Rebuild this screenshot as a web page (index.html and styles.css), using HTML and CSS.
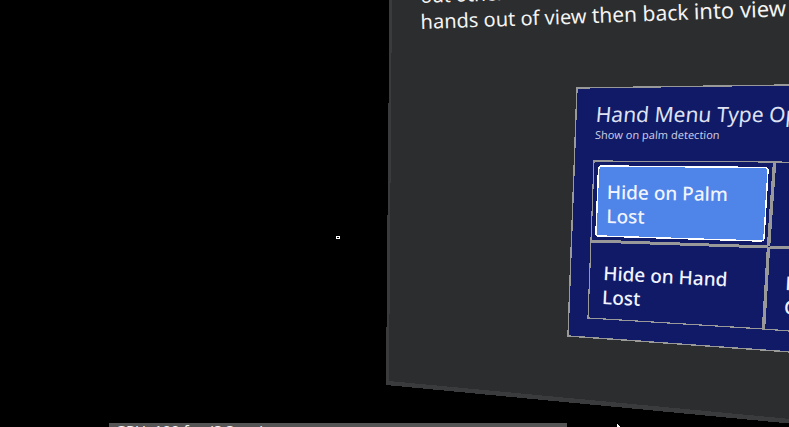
FILE: index.html
```html
<!DOCTYPE html>
<html lang="en">
<head>
<meta charset="utf-8">
<title>Hand Menu</title>
<link rel="stylesheet" href="styles.css">
</head>
<body>
<main class="scene">
  <svg class="geometry" aria-hidden="true" shape-rendering="crispEdges">
    <path fill="#3a3b3c" d="M389 -10V48L386 385L1192 462V-10Z"/>
    <path fill="#2c2d2f" d="M392 -10L389 381L1192 457V-10Z"/>
    <path fill="#101a67" stroke="#999" stroke-width="1.4" d="M577 88L1000 82V367L568 336Z"/>
    <g fill="none" stroke="#999">
      <path stroke-width="1.2" d="M1000 165L774 162L594 161L591 240L588 318L764 329L1000 348"/>
      <path stroke-width="3" d="M591 241L768 247L1000 256"/>
      <path stroke-width="3.4" d="M774.5 163L768.5 247L763.5 329"/>
    </g>
    <path fill="#4f84e8" stroke="#fff" stroke-width="1.5" stroke-linejoin="round" d="M602 166L765 167.500Q768 167.500 768 170.500L764 238Q763.500 241.500 760 241L599 236Q596 236 596 233L598.500 169Q599 166 602 166Z"/>
    <path stroke="#101a67" stroke-width="1.5" d="M768 246.500h1.500"/>
    <rect x="336.500" y="236.500" width="3" height="2" fill="none" stroke="#fff"/>
    <path fill="#fff" d="M617 424L625 432H617Z"/>
  </svg>

  <p class="copy copy-first">out others</p>
  <p class="copy copy-second">hands out of view <span class="near">then back</span> <span class="nearer">into view</span></p>

  <section class="menu">
    <h1 class="title">Hand Menu Type Options</h1>
    <p class="subtitle">Show on palm detection</p>
    <button class="option palm" type="button"><span class="row">Hide on Palm</span><span class="row">Lost</span></button>
    <button class="option hand" type="button"><span class="row">Hide on Hand</span><span class="row">Lost</span></button>
    <button class="option edge" type="button"><span class="row">H</span><span class="row">C</span></button>
  </section>

  <aside class="profiler">GPU: 100 fps (8.3 ms)</aside>
</main>
</body>
</html>
```
FILE: styles.css
```css
* {
  box-sizing: border-box;
}

body {
  margin: 0;
  background: #000;
  font-family: "Noto Sans", "Open Sans", sans-serif;
}

.scene {
  position: relative;
  height: 100vh;
  overflow: hidden;
  color: #f4f4f4;
}

.geometry {
  position: absolute;
  inset: 0;
  width: 100%;
  height: 100%;
}

.copy,
.title,
.subtitle,
.option,
.profiler {
  position: absolute;
  margin: 0;
  white-space: nowrap;
}

.copy {
  left: 421px;
  font-size: 19px;
  line-height: 24px;
  transform-origin: left bottom;
  transform: rotate(-2deg);
}

.copy-first {
  top: -16px;
}

.copy-second {
  top: 8px;
  font-size: 20px;
}

.near {
  font-size: 21px;
}

.nearer {
  font-size: 22px;
}

.title {
  left: 596px;
  top: 100px;
  font-size: 21px;
  font-weight: 400;
  line-height: 28px;
  color: #dfe2f2;
  transform: skewX(-5deg);
}

.subtitle {
  left: 595px;
  top: 127px;
  font-size: 11px;
  line-height: 16px;
  color: #c5c9e2;
  transform: skewX(-4deg);
}

.option {
  padding: 0;
  border: 0;
  background: none;
  color: #f1f4ff;
  font: 500 19px/24px "Noto Sans", "Open Sans", sans-serif;
  text-align: left;
  transform-origin: left top;
}

.row {
  display: block;
}

.palm {
  left: 607px;
  top: 180px;
  transform: rotate(1deg);
}

.hand {
  left: 604px;
  top: 261px;
  transform: rotate(3deg);
}

.edge {
  left: 786px;
  top: 271px;
  transform: rotate(3deg);
}

.profiler {
  left: 109px;
  top: 423px;
  width: 458px;
  padding-left: 6px;
  background: #555;
  font-size: 15px;
  line-height: 14px;
}
```
